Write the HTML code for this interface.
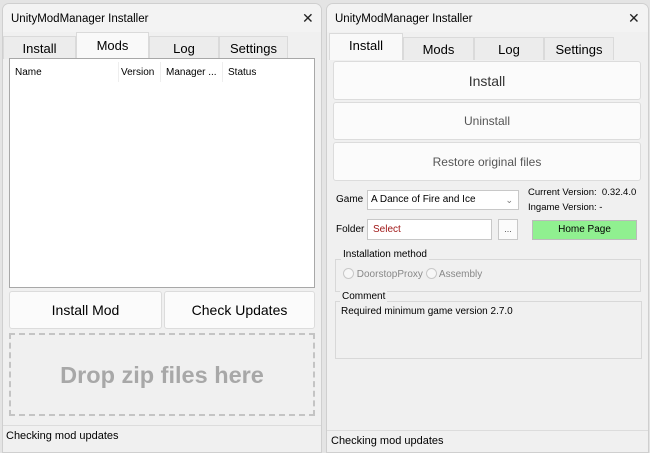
<!DOCTYPE html>
<html><head><style>
*{box-sizing:border-box;margin:0;padding:0}
body{width:650px;height:449px;background:#e4e4e4;font-family:"Liberation Sans",sans-serif;color:#000;position:relative;overflow:hidden}
.win{position:absolute;background:#f0f0f0;border:1px solid #cfcfcf;border-radius:7px 7px 0 0;overflow:hidden}
.title{position:absolute;left:8px;top:9px;font-size:11.5px}
.x{position:absolute;font-size:14px;color:#222}
.a{position:absolute}
.tab{position:absolute;background:#ececec;border:1px solid #dadada;border-bottom:none;text-align:center;font-size:13px}
.tab.on{background:#f9f9f9}
.btn{position:absolute;background:#fbfbfb;border:1px solid #dcdcdc;border-radius:3px;text-align:center}
.grp{position:absolute;border:1px solid #d8d8d8}
.lg{position:absolute;background:#f0f0f0;font-size:10px;padding:0 2px}
.rad{display:inline-block;width:11px;height:11px;border:1px solid #c8c8c8;border-radius:50%;vertical-align:-2px;background:#f7f7f7}
</style></head><body>
<div class="win" style="left:2px;top:3px;width:320px;height:450px">
 <div style="position:absolute;left:0;top:0;width:100%;height:28px;background:#f3f3f3"></div>
 <div class="title">UnityModManager Installer</div>
 <div class="x" style="left:299px;top:6px">✕</div>
 <div class="tab" style="left:0;top:32px;width:73px;height:23px;line-height:23px">Install</div>
 <div class="tab on" style="left:73px;top:28px;width:73px;height:27px;line-height:25px">Mods</div>
 <div class="tab" style="left:146px;top:32px;width:70px;height:23px;line-height:23px">Log</div>
 <div class="tab" style="left:216px;top:32px;width:69px;height:23px;line-height:23px">Settings</div>
 <div class="a" style="left:6px;top:54px;width:306px;height:230px;background:#fff;border:1px solid #a8a8a8"></div>
 <div class="a" style="left:12px;top:63px;font-size:10px">Name</div>
 <div class="a" style="left:115px;top:58px;width:1px;height:20px;background:#eee"></div>
 <div class="a" style="left:118px;top:63px;font-size:10px">Version</div>
 <div class="a" style="left:157px;top:58px;width:1px;height:20px;background:#eee"></div>
 <div class="a" style="left:163px;top:63px;font-size:10px">Manager ...</div>
 <div class="a" style="left:219px;top:58px;width:1px;height:20px;background:#eee"></div>
 <div class="a" style="left:225px;top:63px;font-size:10px">Status</div>
 <div class="btn" style="left:6px;top:287px;width:153px;height:38px;line-height:37px;font-size:14px">Install Mod</div>
 <div class="btn" style="left:161px;top:287px;width:151px;height:38px;line-height:37px;font-size:14px">Check Updates</div>
 <div class="a" style="left:6px;top:329px;width:306px;height:83px;border:2px dashed #c4c4c4;text-align:center;line-height:80px;font-size:23.5px;font-weight:bold;color:#a8a8a8">Drop zip files here</div>
 <div class="a" style="left:0;top:421px;width:100%;height:1px;background:#dcdcdc"></div>
 <div class="a" style="left:3px;top:426px;font-size:11px">Checking mod updates</div>
</div>
<div class="win" style="left:326px;top:3px;width:323px;height:450px">
 <div style="position:absolute;left:0;top:0;width:100%;height:28px;background:#f3f3f3"></div>
 <div class="title">UnityModManager Installer</div>
 <div class="x" style="left:301px;top:6px">✕</div>
 <div class="tab on" style="left:2px;top:29px;width:74px;height:27px;line-height:24px">Install</div>
 <div class="tab" style="left:76px;top:33px;width:71px;height:23px;line-height:23px">Mods</div>
 <div class="tab" style="left:147px;top:33px;width:70px;height:23px;line-height:23px">Log</div>
 <div class="tab" style="left:217px;top:33px;width:70px;height:23px;line-height:23px">Settings</div>
 <div class="btn" style="left:6px;top:57px;width:308px;height:39px;line-height:38px;font-size:14px;color:#333">Install</div>
 <div class="btn" style="left:6px;top:98px;width:308px;height:38px;line-height:37px;font-size:12px;color:#555">Uninstall</div>
 <div class="btn" style="left:6px;top:138px;width:308px;height:39px;line-height:38px;font-size:12px;color:#555">Restore original files</div>
 <div class="a" style="left:9px;top:190px;font-size:10px">Game</div>
 <div class="a" style="left:40px;top:186px;width:152px;height:20px;background:#fff;border:1px solid #c8c8c8;font-size:10px;line-height:18px;padding-left:3px">A Dance of Fire and Ice<span style="position:absolute;right:5px;color:#777;font-size:9px">&#8964;</span></div>
 <div class="a" style="left:201px;top:183px;font-size:9.5px">Current Version:&nbsp; 0.32.4.0</div>
 <div class="a" style="left:201px;top:198px;font-size:9.5px">Ingame Version: -</div>
 <div class="a" style="left:9px;top:220px;font-size:10px">Folder</div>
 <div class="a" style="left:40px;top:215px;width:125px;height:21px;background:#fff;border:1px solid #c8c8c8;font-size:10px;line-height:19px;padding-left:5px;color:#a01818">Select</div>
 <div class="a" style="left:171px;top:215px;width:20px;height:21px;background:#fbfbfb;border:1px solid #c8c8c8;font-size:9px;text-align:center;line-height:18px;color:#555">...</div>
 <div class="a" style="left:205px;top:216px;width:105px;height:20px;background:#90f090;border:1px solid #bbb;font-size:10px;text-align:center;line-height:18px">Home Page</div>
 <div class="grp" style="left:8px;top:255px;width:306px;height:33px"></div>
 <div class="lg" style="left:14px;top:245px">Installation method</div>
 <div class="a" style="left:16px;top:264px;font-size:10px;color:#888"><span class="rad"></span> DoorstopProxy <span class="rad"></span> Assembly</div>
 <div class="grp" style="left:8px;top:297px;width:307px;height:58px"></div>
 <div class="lg" style="left:13px;top:287px">Comment</div>
 <div class="a" style="left:14px;top:302px;font-size:10px">Required minimum game version 2.7.0</div>
 <div class="a" style="left:0;top:426px;width:100%;height:1px;background:#dcdcdc"></div>
 <div class="a" style="left:4px;top:431px;font-size:11px">Checking mod updates</div>
</div>
</body></html>
